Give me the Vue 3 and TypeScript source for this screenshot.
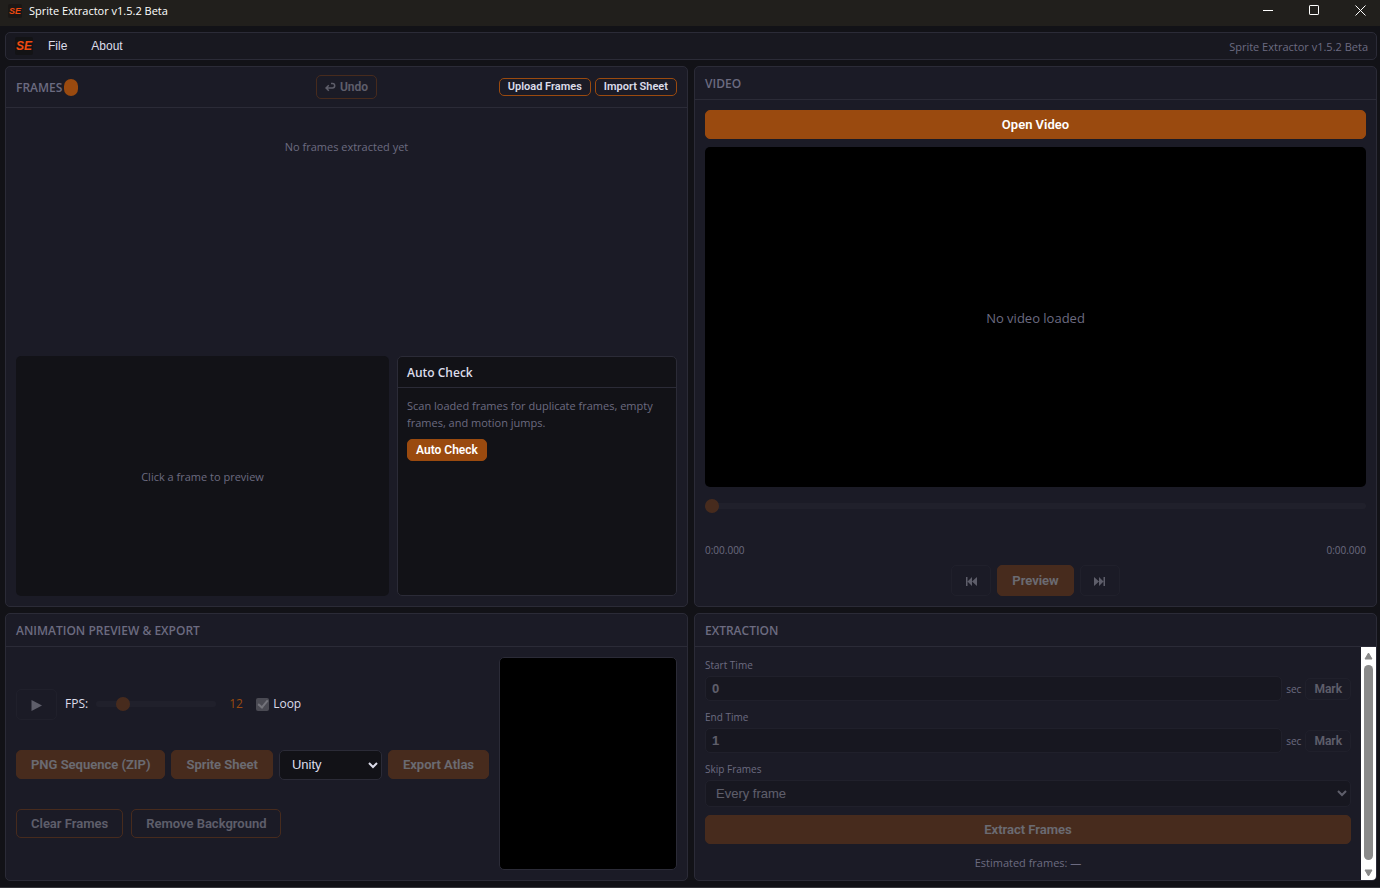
<script setup lang="ts">
import { ref } from 'vue'

const title = 'Sprite Extractor v1.5.2 Beta'
const position = ref(0)
const fps = ref(12)
const loop = ref(true)
const atlas = ref('Unity')
const atlasFormats = ['Unity', 'Godot', 'Phaser']
const startTime = ref(0)
const endTime = ref(1)
const skip = ref('Every frame')
const skipModes = ['Every frame', 'Every 2nd frame', 'Every 3rd frame']
</script>

<template>
  <div class="window">
    <header class="titlebar">
      <span class="logo" aria-hidden="true">SE</span>
      <span class="caption">{{ title }}</span>
      <div class="window-controls">
        <button type="button" aria-label="Minimize">
          <svg width="11" height="11" viewBox="0 0 11 11"><path d="M0 5.5h10" /></svg>
        </button>
        <button type="button" aria-label="Maximize">
          <svg width="11" height="11" viewBox="0 0 11 11"><rect x=".5" y=".5" width="9" height="9" rx=".6" /></svg>
        </button>
        <button type="button" aria-label="Close">
          <svg width="11" height="11" viewBox="0 0 11 11"><path d="M.5.5l10 10M10.5.5l-10 10" /></svg>
        </button>
      </div>
    </header>

    <div class="app">
      <nav class="menubar">
        <span class="logo large" aria-hidden="true">SE</span>
        <button type="button" class="menu">File</button>
        <button type="button" class="menu">About</button>
        <span class="version">{{ title }}</span>
      </nav>

      <main class="panels">
        <section class="panel">
          <div class="panel-head frames-head">
            <div class="head-title"><h2>Frames</h2><span class="count"></span></div>
            <button type="button" class="btn outline undo" disabled>
              <svg width="11" height="10" viewBox="0 0 11 10"><path d="M1 6h6.500a2.200 2.200 0 0 0 0-4.400H6M3.800 3.200L1 6l2.800 2.800" /></svg>
              Undo
            </button>
            <div class="head-actions">
              <button type="button" class="btn outline tiny">Upload Frames</button>
              <button type="button" class="btn outline tiny">Import Sheet</button>
            </div>
          </div>
          <div class="panel-body frames-body">
            <p class="empty">No frames extracted yet</p>
            <div class="inspect">
              <div class="frame-preview">Click a frame to preview</div>
              <div class="check">
                <h3>Auto Check</h3>
                <div class="check-body">
                  <p>Scan loaded frames for duplicate frames, empty frames, and motion jumps.</p>
                  <button type="button" class="btn small">Auto Check</button>
                </div>
              </div>
            </div>
          </div>
        </section>

        <section class="panel">
          <div class="panel-head"><h2>Video</h2></div>
          <div class="panel-body video-body">
            <button type="button" class="btn">Open Video</button>
            <div class="screen">No video loaded</div>
            <input v-model.number="position" class="seek" type="range" min="0" max="100" aria-label="Position" disabled />
            <div class="times"><span>0:00.000</span><span>0:00.000</span></div>
            <div class="transport">
              <button type="button" class="btn ghost icon" aria-label="Previous frame" disabled>
                <svg width="11" height="9" viewBox="0 0 11 9"><path d="M0 0h1.500v9H0zM6 0v9L1.500 4.500zM11 0v9L6 4.500z" /></svg>
              </button>
              <button type="button" class="btn tall" disabled>Preview</button>
              <button type="button" class="btn ghost icon" aria-label="Next frame" disabled>
                <svg width="11" height="9" viewBox="0 0 11 9"><path d="M9.500 0H11v9H9.500zM5 0v9l4.500-4.500zM0 0v9l5-4.500z" /></svg>
              </button>
            </div>
          </div>
        </section>

        <section class="panel">
          <div class="panel-head"><h2>Animation Preview &amp; Export</h2></div>
          <div class="panel-body export-body">
            <div class="controls">
              <div class="row playback">
                <button type="button" class="btn ghost icon play" aria-label="Play" disabled>
                  <svg width="11" height="11" viewBox="0 0 11 11"><path d="M.5 0v11L11 5.500z" /></svg>
                </button>
                <label for="fps">FPS:</label>
                <input id="fps" v-model.number="fps" class="fps" type="range" min="1" max="60" disabled />
                <output class="fps-value" for="fps">{{ fps }}</output>
                <label class="loop"><input v-model="loop" type="checkbox" disabled />Loop</label>
              </div>
              <div class="row">
                <button type="button" class="btn" disabled>PNG Sequence (ZIP)</button>
                <button type="button" class="btn" disabled>Sprite Sheet</button>
                <select v-model="atlas" class="field atlas" aria-label="Atlas format">
                  <option v-for="f in atlasFormats" :key="f">{{ f }}</option>
                </select>
                <button type="button" class="btn" disabled>Export Atlas</button>
              </div>
              <div class="row wide">
                <button type="button" class="btn outline" disabled>Clear Frames</button>
                <button type="button" class="btn outline" disabled>Remove Background</button>
              </div>
            </div>
            <div class="canvas"></div>
          </div>
        </section>

        <section class="panel">
          <div class="panel-head"><h2>Extraction</h2></div>
          <div class="scroll">
            <form class="panel-body form" @submit.prevent>
              <label for="start">Start Time</label>
              <div class="time-row">
                <input id="start" v-model="startTime" class="field" type="text" disabled />
                <span>sec</span>
                <button type="button" class="btn ghost mark" disabled>Mark</button>
              </div>
              <label for="end">End Time</label>
              <div class="time-row">
                <input id="end" v-model="endTime" class="field" type="text" disabled />
                <span>sec</span>
                <button type="button" class="btn ghost mark" disabled>Mark</button>
              </div>
              <label for="skip">Skip Frames</label>
              <select id="skip" v-model="skip" class="field skip" disabled>
                <option v-for="m in skipModes" :key="m">{{ m }}</option>
              </select>
              <button type="submit" class="btn" disabled>Extract Frames</button>
              <p class="estimate">Estimated frames: —</p>
            </form>
            <div class="scrollbar" aria-hidden="true">
              <svg width="9" height="8" viewBox="0 0 9 8"><path d="M4.500 1L8 7H1z" /></svg>
              <div class="thumb"></div>
              <svg width="9" height="8" viewBox="0 0 9 8"><path d="M4.500 7L8 1H1z" /></svg>
            </div>
          </div>
        </section>
      </main>
    </div>
  </div>
</template>

<style>
body {
  background: #121217;
}
</style>

<style scoped>
* {
  box-sizing: border-box;
}
.window {
  --accent: #9a4a0f;
  --panel: #1b1b26;
  --line: #2b2b37;
  --muted: #6c6b80;
  --text: #dcdcea;
  display: flex;
  flex-direction: column;
  min-height: 100vh;
  background: #121217;
  border-bottom: 1px solid #35353a;
  color: var(--text);
  font-family: "Open Sans", "Noto Sans", sans-serif;
  font-size: 11px;
  line-height: 16px;
}
h2, h3, p {
  margin: 0;
}
button, input, select {
  font-family: "Liberation Sans", Arial, sans-serif;
  font-size: 13px;
}
svg {
  display: block;
}

/* Title bar */
.titlebar {
  display: flex;
  align-items: center;
  height: 26px;
  padding: 0 14px 5px 8px;
  background: #211f1c;
  color: #fff;
}
.caption {
  margin-left: 7px;
}
.logo {
  display: grid;
  place-items: center;
  width: 14px;
  height: 14px;
  border-radius: 2px;
  background: #1a1715;
  color: #f04a10;
  font: italic 900 9px/14px "Liberation Sans", Arial, sans-serif;
}
.logo.large {
  width: 18px;
  height: 18px;
  margin-right: 1px;
  background: #131315;
  font-size: 12px;
  line-height: 18px;
}
.window-controls {
  display: flex;
  gap: 35px;
  margin-left: auto;
}
.window-controls button {
  padding: 0;
  border: 0;
  background: none;
}
.window-controls path,
.window-controls rect {
  fill: none;
  stroke: #fff;
}

.app {
  flex: 1;
  display: flex;
  flex-direction: column;
  gap: 6px;
  padding: 6px 3px 6px 5px;
}
.menubar {
  display: flex;
  align-items: center;
  height: 28px;
  padding: 0 8px 0 9px;
  border: 1px solid var(--line);
  border-radius: 5px;
  background: #181820;
}
.menu {
  margin-left: 4px;
  padding: 4px 10px;
  border: 0;
  background: none;
  color: var(--text);
  font-size: 12px;
  line-height: 16px;
}
.version {
  margin: 2px 0 0 auto;
  color: var(--muted);
}

/* Panels */
.panels {
  flex: 1;
  display: grid;
  grid-template-columns: repeat(2, minmax(0, 1fr));
  grid-template-rows: 1fr 268px;
  gap: 6px;
}
.panel {
  display: flex;
  flex-direction: column;
  overflow: hidden;
  border: 1px solid var(--line);
  border-radius: 5px;
  background: var(--panel);
}
.panel-head {
  padding: 8px 10px;
  border-bottom: 1px solid var(--line);
}
.panel-body {
  flex: 1;
  padding: 10px;
}
h2 {
  padding-top: 1px;
  color: var(--muted);
  font-size: 12px;
  font-weight: 600;
  line-height: 15px;
  text-transform: uppercase;
}

/* Buttons and fields */
.btn {
  height: 29px;
  padding: 0 14px;
  border: 1px solid var(--accent);
  border-radius: 5px;
  background: var(--accent);
  color: #fff;
  font-family: Roboto, Arial, sans-serif;
  font-weight: 600;
  line-height: 16px;
}
.btn:disabled,
.field:disabled {
  opacity: 0.35;
}
.outline {
  background: transparent;
  color: var(--text);
}
.ghost {
  border-color: var(--line);
  background: transparent;
  color: var(--text);
}
.tiny {
  height: 18px;
  padding: 0 8px;
  font-size: 11px;
  line-height: 14px;
}
.small {
  height: 22px;
  padding: 0 8px;
  font-size: 12px;
}
.tall {
  height: 31px;
}
.icon {
  display: grid;
  place-items: center;
  width: 40px;
  height: 31px;
  padding: 2px 0 0;
}
.icon svg {
  fill: currentColor;
}
.field {
  border: 1px solid var(--line);
  border-radius: 5px;
  background: #121217;
  color: var(--text);
}
input[type="range"] {
  appearance: none;
  height: 14px;
  margin: 0;
  background: transparent;
}
input[type="range"]:disabled {
  opacity: 0.35;
}
input[type="range"]::-webkit-slider-runnable-track {
  height: 6px;
  border-radius: 3px;
  background: #2b2b37;
}
input[type="range"]::-webkit-slider-thumb {
  appearance: none;
  width: 14px;
  height: 14px;
  margin-top: -4px;
  border-radius: 50%;
  background: var(--accent);
}

/* Frames */
.frames-head {
  display: grid;
  grid-template-columns: 1fr auto 1fr;
  align-items: center;
}
.head-title,
.head-actions {
  display: flex;
  align-items: center;
}
.head-actions {
  justify-content: flex-end;
  gap: 4px;
}
.count {
  width: 14px;
  height: 17px;
  margin-left: 2px;
  border-radius: 7px;
  background: var(--accent);
}
.undo {
  display: flex;
  align-items: center;
  gap: 4px;
  height: 24px;
  padding: 0 8px;
  font-size: 12px;
}
.undo svg {
  fill: none;
  stroke: currentColor;
  stroke-width: 1.5;
}
.frames-body {
  display: flex;
  flex-direction: column;
  justify-content: space-between;
}
.empty {
  padding-top: 21px;
  color: var(--muted);
  text-align: center;
}
.inspect {
  display: grid;
  grid-template-columns: 1fr 280px;
  gap: 8px;
  height: 240px;
}
.frame-preview {
  display: grid;
  place-items: center;
  padding-top: 2px;
  border-radius: 5px;
  background: #121217;
  color: var(--muted);
}
.check {
  border: 1px solid var(--line);
  border-radius: 5px;
  background: #121217;
}
h3 {
  padding: 8px 9px 6px;
  border-bottom: 1px solid var(--line);
  font-size: 12px;
  font-weight: 600;
  line-height: 16px;
}
.check-body {
  padding: 9px;
  color: var(--muted);
  line-height: 17px;
}
.check-body .btn {
  margin-top: 8px;
}

/* Video */
.video-body {
  display: flex;
  flex-direction: column;
}
.screen {
  flex: 1;
  display: grid;
  place-items: center;
  margin: 8px 0 12px;
  padding-top: 2px;
  border-radius: 5px;
  background: #000;
  color: var(--muted);
  font-size: 13px;
}
.times {
  display: flex;
  justify-content: space-between;
  margin: 29px 0 7px;
  color: var(--muted);
  font-size: 10px;
}
.transport {
  display: flex;
  justify-content: center;
  gap: 6px;
}

/* Export */
.export-body {
  display: flex;
  gap: 8px;
}
.controls {
  flex: 1;
  display: flex;
  flex-direction: column;
  justify-content: space-evenly;
  min-width: 0;
  padding-bottom: 2px;
}
.row {
  display: flex;
  align-items: center;
  gap: 6px;
  white-space: nowrap;
}
.row.wide,
.playback {
  gap: 8px;
}
.playback {
  padding-top: 2px;
  font-size: 12px;
}
.play {
  width: 41px;
}
.fps {
  width: 120px;
}
.fps-value {
  width: 24px;
  padding-left: 5px;
  color: var(--accent);
}
.loop {
  display: flex;
  align-items: center;
  gap: 4px;
}
.loop input {
  appearance: none;
  width: 13px;
  height: 13px;
  margin: 0;
  border-radius: 2px;
  background: #4a4a53;
  display: grid;
  place-items: center;
}
.loop input:checked::after {
  content: "";
  width: 4px;
  height: 8px;
  margin-top: -2px;
  border: solid #73737b;
  border-width: 0 2px 2px 0;
  transform: rotate(40deg);
}
.atlas {
  width: 103px;
  height: 30px;
  padding: 0 8px;
}
.canvas {
  flex: none;
  width: 178px;
  border: 1px solid var(--line);
  border-radius: 5px;
  background: #000;
}

/* Extraction */
.scroll {
  flex: 1;
  display: flex;
}
.form {
  display: flex;
  flex-direction: column;
  color: var(--muted);
  font-size: 10px;
}
.time-row {
  display: flex;
  align-items: center;
  gap: 4px;
  margin: 3px 0 8px;
}
.time-row .field {
  flex: 1;
  min-width: 0;
  height: 25px;
  padding: 0 6px;
  font-weight: 700;
}
.mark {
  height: 22px;
  padding: 0 8px;
  font-size: 12px;
}
.skip {
  height: 27px;
  margin: 3px 0 8px;
  padding: 0 6px;
}
.estimate {
  padding-top: 11px;
  font-size: 11px;
  text-align: center;
}
.scrollbar {
  display: flex;
  flex-direction: column;
  align-items: center;
  gap: 5px;
  width: 15px;
  padding: 5px 0 4px;
  background: #fff;
}
.scrollbar svg {
  fill: #8a8a8a;
  stroke: #8a8a8a;
  stroke-linejoin: round;
}
.scrollbar .thumb {
  flex: 1;
  width: 9px;
  margin-bottom: 4px;
  border-radius: 5px;
  background: #8a8a8a;
}
</style>
